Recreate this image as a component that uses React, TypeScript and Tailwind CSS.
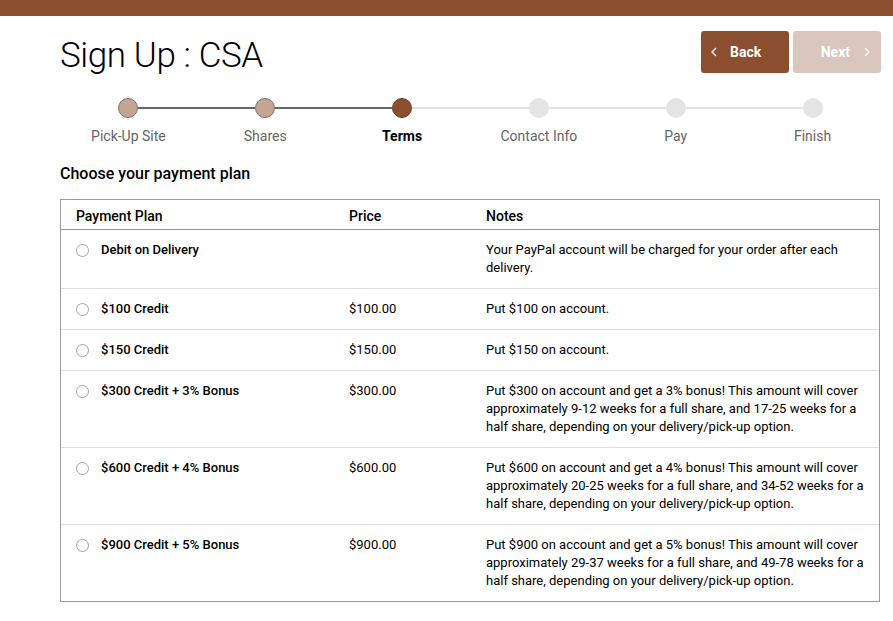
import { Fragment } from 'react';

const steps = [
  { label: 'Pick-Up Site', state: 'done' },
  { label: 'Shares', state: 'done' },
  { label: 'Terms', state: 'current' },
  { label: 'Contact Info', state: 'todo' },
  { label: 'Pay', state: 'todo' },
  { label: 'Finish', state: 'todo' },
];

const plans = [
  {
    name: 'Debit on Delivery',
    price: '',
    notes: 'Your PayPal account will be charged for your order after each delivery.',
  },
  { name: '$100 Credit', price: '$100.00', notes: 'Put $100 on account.' },
  { name: '$150 Credit', price: '$150.00', notes: 'Put $150 on account.' },
  {
    name: '$300 Credit + 3% Bonus',
    price: '$300.00',
    notes:
      'Put $300 on account and get a 3% bonus! This amount will cover approximately 9-12 weeks for a full share, and 17-25 weeks for a half share, depending on your delivery/pick-up option.',
  },
  {
    name: '$600 Credit + 4% Bonus',
    price: '$600.00',
    notes:
      'Put $600 on account and get a 4% bonus! This amount will cover approximately 20-25 weeks for a full share, and 34-52 weeks for a half share, depending on your delivery/pick-up option.',
  },
  {
    name: '$900 Credit + 5% Bonus',
    price: '$900.00',
    notes:
      'Put $900 on account and get a 5% bonus! This amount will cover approximately 29-37 weeks for a full share, and 49-78 weeks for a half share, depending on your delivery/pick-up option.',
  },
];

function Chevron({ dir }: { dir: 'left' | 'right' }) {
  return (
    <svg width="6" height="10" viewBox="0 0 6 10" fill="none" stroke="currentColor" strokeWidth="1.3">
      {dir === 'left' ? <path d="M5 1L1 5l4 4" /> : <path d="M1 1l4 4-4 4" />}
    </svg>
  );
}

function StepDot({ state }: { state: string }) {
  if (state === 'done') return <div className="w-5 h-5 rounded-full bg-[#c5a592] border border-[#7d716b] shrink-0" />;
  if (state === 'current') return <div className="w-5 h-5 rounded-full bg-[#8b4f2f] border border-[#6e3d24] shrink-0" />;
  return <div className="w-5 h-5 rounded-full bg-[#e4e4e4] shrink-0" />;
}

export default function App() {
  return (
    <div className="min-h-screen bg-white text-black" style={{ fontFamily: 'Roboto, "Liberation Sans", sans-serif' }}>
      <div className="h-4 bg-[#8b4f2f]" />

      <div className="pl-[60px] pr-[12px]">
        <div className="mt-[15px] h-[42px] flex items-center justify-between">
          <h1 className="text-[35px] font-light leading-none pt-[6px] tracking-[-0.4px]">Sign Up : CSA</h1>
          <div className="flex gap-1">
            <button className="w-[88px] h-[42px] rounded-[3px] bg-[#8b4f2f] text-white text-[14px] font-bold flex items-center pl-[10px] gap-[13px]">
              <Chevron dir="left" />
              Back
            </button>
            <button className="w-[88px] h-[42px] rounded-[3px] bg-[#d9c7bd] text-white text-[14px] font-bold flex items-center justify-end pr-[11px] gap-[14px]">
              Next
              <Chevron dir="right" />
            </button>
          </div>
        </div>

        <div className="mt-[25px] flex items-center px-[58px]">
          {steps.map((s, i) => (
            <Fragment key={s.label}>
              <StepDot state={s.state} />
              {i < steps.length - 1 && (
                <div className={`flex-1 h-[2px] ${i < 2 ? 'bg-[#666666]' : 'bg-[#e4e4e4]'}`} />
              )}
            </Fragment>
          ))}
        </div>

        <div className="mt-2 grid grid-cols-6 text-[14px] leading-5 text-center">
          {steps.map((s) => (
            <div key={s.label} className={s.state === 'current' ? 'font-bold text-black' : 'text-[#666666]'}>
              {s.label}
            </div>
          ))}
        </div>

        <h2 className="mt-[16px] text-[16px] leading-6 font-medium">Choose your payment plan</h2>

        <div className="mt-[13px] mr-px border border-[#9a9a9a] text-[13px]">
          <div className="grid grid-cols-[272px_137px_1fr] h-[30px] pt-[3px] items-center border-b border-[#9a9a9a] text-[14px] font-medium">
            <div className="pl-[15px]">Payment Plan</div>
            <div className="pl-[16px]">Price</div>
            <div className="pl-[16px]">Notes</div>
          </div>
          {plans.map((p, i) => (
            <div
              key={p.name}
              className={`grid grid-cols-[272px_137px_1fr] py-[11px] leading-[18px] ${i < plans.length - 1 ? 'border-b border-[#e2e2e2]' : ''}`}
            >
              <div className="pl-[15px] flex items-start gap-[12px]">
                <span className="mt-[3px] w-[13px] h-[13px] rounded-full border border-[#a6a6a6] bg-white shrink-0" />
                <span className="font-medium">{p.name}</span>
              </div>
              <div className="pl-[16px]">{p.price}</div>
              <div className="pl-[16px] pr-[13px]">{p.notes}</div>
            </div>
          ))}
        </div>
      </div>
    </div>
  );
}
